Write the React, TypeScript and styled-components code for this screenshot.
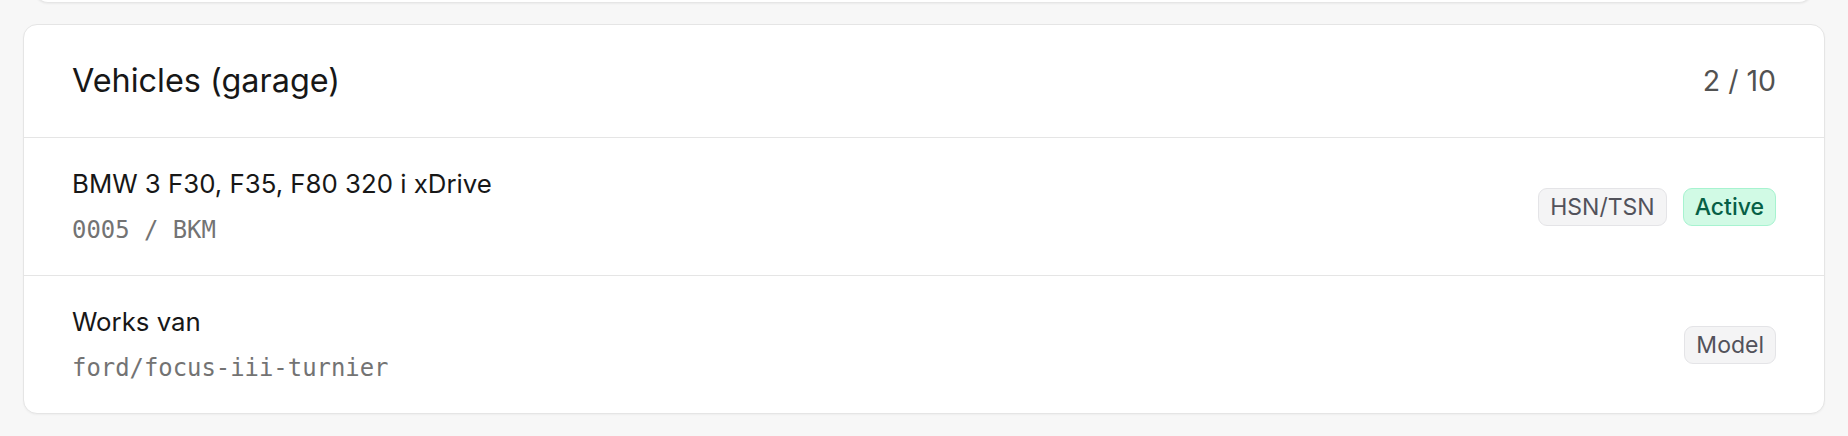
import React from "react";
import styled, { createGlobalStyle } from "styled-components";

const GlobalStyle = createGlobalStyle`
  html, body { margin: 0; padding: 0; background: #f7f7f7; }
  body { font-family: Inter, "Noto Sans", sans-serif; -webkit-font-smoothing: antialiased; }
`;

const Page = styled.div`
  display: flex;
  flex-direction: column;
  padding: 0 23px 24px;
`;

const PrevCardEdge = styled.div`
  height: 22px;
  margin: -20px 12px 0 11px;
  background: #ffffff;
  border: 1px solid #e6e6e6;
  border-top: none;
  border-radius: 0 0 14px 14px;
  box-shadow: 0 1px 2px rgba(0, 0, 0, 0.05);
`;

const Card = styled.section`
  margin-top: 21px;
  background: #ffffff;
  border: 1px solid #e5e5e5;
  border-radius: 14px;
  box-shadow: 0 1px 2px rgba(0, 0, 0, 0.04);
  overflow: hidden;
`;

const Header = styled.header`
  display: flex;
  align-items: center;
  justify-content: space-between;
  height: 112px;
  padding: 0 48px;
  border-bottom: 1px solid #e5e5e5;
`;

const Title = styled.h2`
  margin: 0;
  font-size: 32.4px;
  line-height: 38px;
  font-weight: 420;
  color: #171717;
`;

const Count = styled.span`
  font-size: 28.5px;
  line-height: 34px;
  color: #525252;
`;

const Row = styled.div`
  display: flex;
  align-items: center;
  justify-content: space-between;
  padding: 30px 48px;
  & + & { border-top: 1px solid #e5e5e5; }
`;

const Info = styled.div`
  display: flex;
  flex-direction: column;
  gap: 15px;
`;

const Name = styled.div`
  font-size: 25.8px;
  line-height: 32px;
  color: #171717;
`;

const Code = styled.div`
  font-family: "DejaVu Sans Mono", "Liberation Mono", monospace;
  font-size: 23.9px;
  line-height: 30px;
  color: #737373;
`;

const Badges = styled.div`
  display: flex;
  align-items: center;
  gap: 16px;
`;

const Badge = styled.span<{ $tone?: "neutral" | "success" }>`
  display: inline-flex;
  align-items: center;
  height: 38px;
  box-sizing: border-box;
  padding: 0 11px;
  border-radius: 9px;
  font-size: 23px;
  font-weight: ${(p) => (p.$tone === "success" ? 500 : 440)};
  border: 1px solid ${(p) => (p.$tone === "success" ? "#a7f3d0" : "#e4e4e7")};
  background: ${(p) => (p.$tone === "success" ? "#d1fae5" : "#f4f4f5")};
  color: ${(p) => (p.$tone === "success" ? "#065f46" : "#52525b")};
`;

const vehicles = [
  {
    name: "BMW 3 F30, F35, F80 320 i xDrive",
    code: "0005 / BKM",
    badges: [
      { label: "HSN/TSN", tone: "neutral" as const },
      { label: "Active", tone: "success" as const },
    ],
  },
  {
    name: "Works van",
    code: "ford/focus-iii-turnier",
    badges: [{ label: "Model", tone: "neutral" as const }],
  },
];

export default function App() {
  return (
    <>
      <GlobalStyle />
      <Page>
        <PrevCardEdge />
        <Card>
          <Header>
            <Title>Vehicles (garage)</Title>
            <Count>2 / 10</Count>
          </Header>
          {vehicles.map((v) => (
            <Row key={v.name}>
              <Info>
                <Name>{v.name}</Name>
                <Code>{v.code}</Code>
              </Info>
              <Badges>
                {v.badges.map((b) => (
                  <Badge key={b.label} $tone={b.tone}>
                    {b.label}
                  </Badge>
                ))}
              </Badges>
            </Row>
          ))}
        </Card>
      </Page>
    </>
  );
}
